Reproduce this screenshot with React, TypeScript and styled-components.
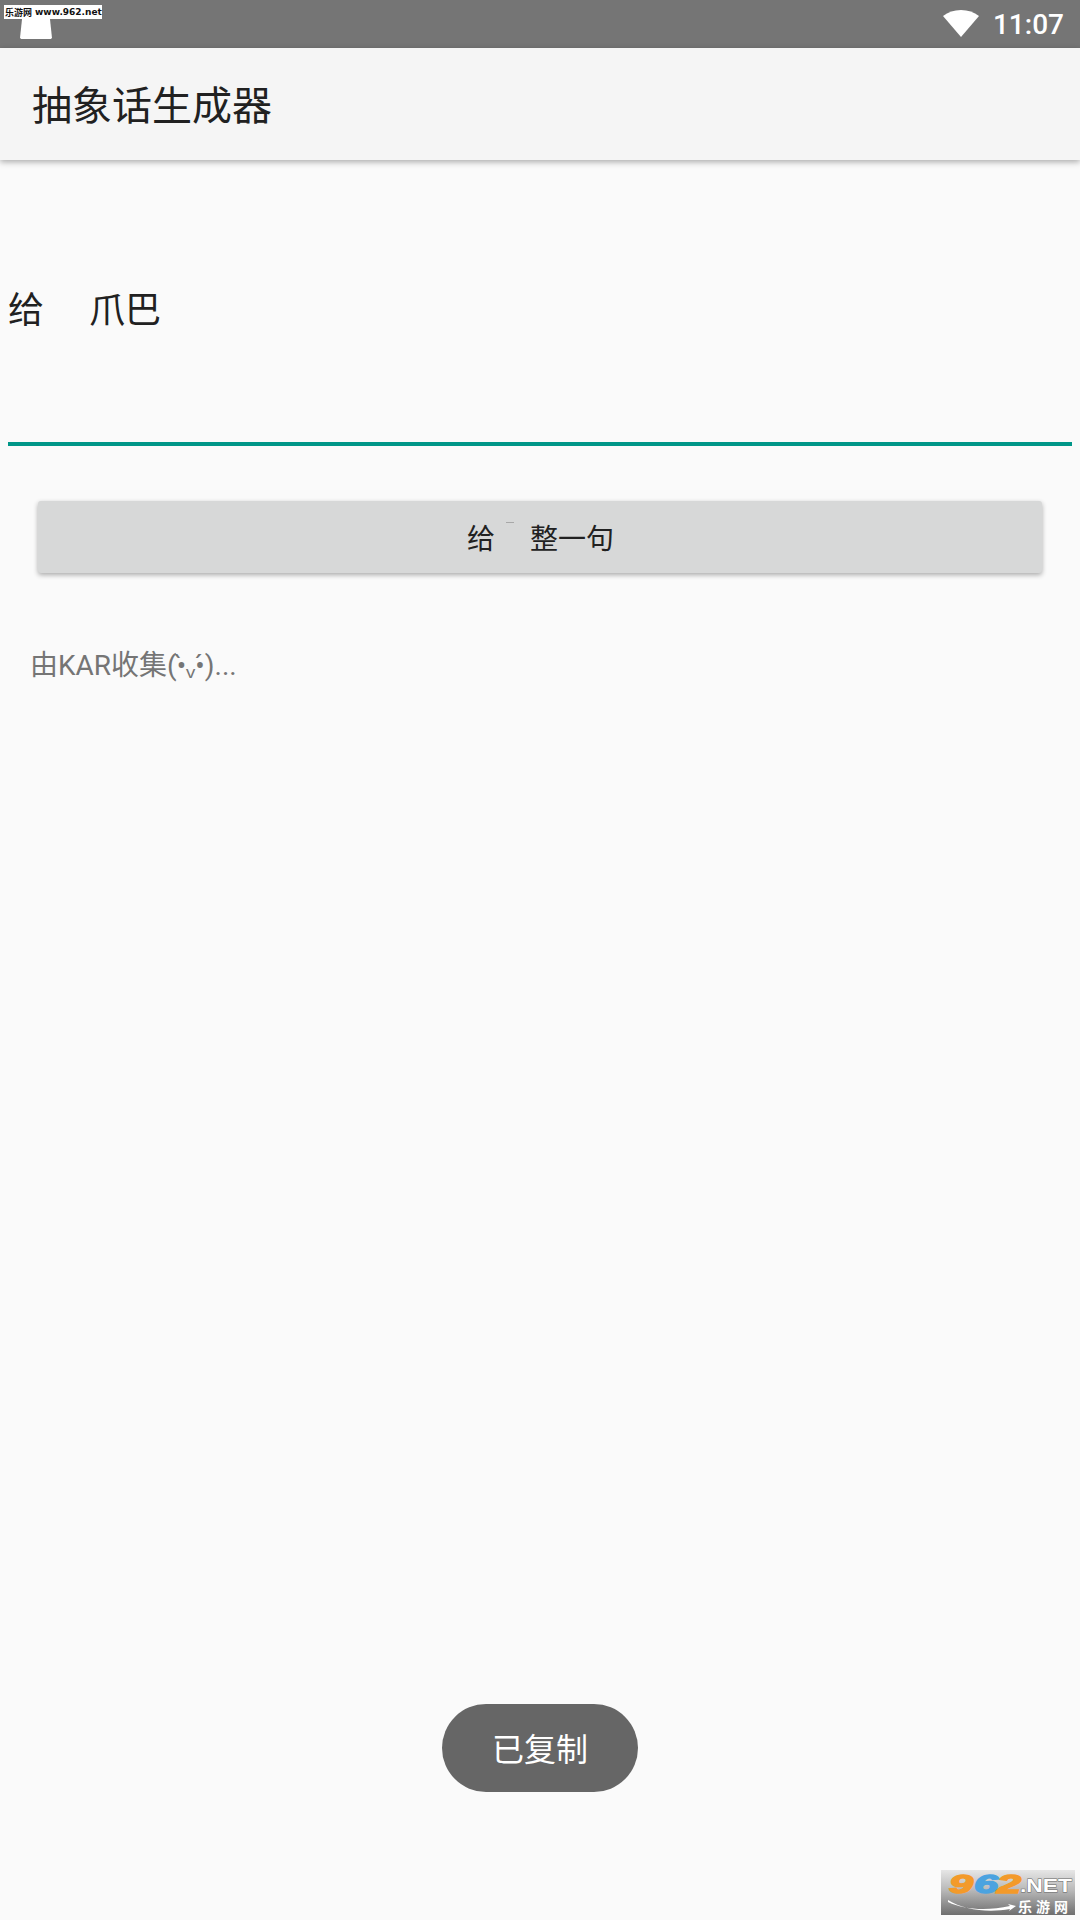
import React from "react";
import styled, { createGlobalStyle } from "styled-components";

const CJK = `"Noto Sans CJK SC", "Noto Sans", sans-serif`;

const GlobalStyle = createGlobalStyle`
  html, body {
    margin: 0;
    padding: 0;
    background: #fafafa;
  }
  * {
    box-sizing: border-box;
  }
`;

const Screen = styled.div`
  position: relative;
  width: 1080px;
  height: 1920px;
  overflow: hidden;
  background: #fafafa;
  font-family: ${CJK};
`;

const StatusBar = styled.div`
  display: flex;
  align-items: center;
  justify-content: space-between;
  height: 48px;
  padding: 0 16px 0 20px;
  background: #757575;
`;

const NotifyIcon = styled.div`
  align-self: flex-start;
  width: 32px;
  height: 22px;
  margin-top: 17px;
  background: #fff;
  clip-path: polygon(7% 0, 93% 0, 100% 95%, 96% 100%, 4% 100%, 0 95%);
`;

const StatusRight = styled.div`
  display: flex;
  align-items: center;
  gap: 14px;
`;

const Clock = styled.span`
  padding-top: 2px;
  font-family: Roboto, sans-serif;
  font-size: 28px;
  font-weight: 500;
  line-height: 48px;
  color: #fff;
`;

const Toolbar = styled.header`
  position: relative;
  display: flex;
  align-items: center;
  height: 112px;
  padding: 0 0 2px 32px;
  background: #f5f5f5;
  box-shadow: 0 2px 6px rgba(0, 0, 0, 0.32);
`;

const Title = styled.h1`
  margin: 0;
  font-size: 40px;
  font-weight: 400;
  color: #212121;
`;

const InputArea = styled.div`
  display: flex;
  height: 286px;
  margin: 0 8px;
  padding-top: 122px;
  border-bottom: 4px solid #009688;
  font-size: 36px;
  line-height: 50px;
  color: #212121;
`;

const InputWord = styled.span<{ $gap?: number }>`
  margin-left: ${({ $gap }) => $gap ?? 0}px;
`;

const ActionButton = styled.button`
  position: relative;
  display: flex;
  align-items: center;
  justify-content: center;
  width: 1004px;
  height: 72px;
  margin: 55px 0 0 38px;
  padding: 0 0 0 1px;
  border: 0;
  border-radius: 3px;
  background: #d7d8d8;
  box-shadow: 0 2px 5px rgba(0, 0, 0, 0.32);
  font-family: ${CJK};
  font-size: 28px;
  color: #212121;
`;

const ButtonGap = styled.span`
  position: relative;
  display: inline-block;
  width: 35px;
  height: 36px;
  &::before {
    content: "";
    position: absolute;
    left: 11px;
    top: 3px;
    width: 8px;
    height: 1px;
    background: #a8a8a8;
  }
`;

const Footnote = styled.p`
  margin: 73px 0 0 30px;
  font-family: Roboto, ${CJK};
  font-size: 28px;
  line-height: 40px;
  color: #757575;
`;

const Toast = styled.div`
  position: absolute;
  left: 442px;
  top: 1704px;
  display: flex;
  align-items: center;
  justify-content: center;
  width: 196px;
  height: 88px;
  padding-bottom: 3px;
  border-radius: 44px;
  background: #666;
  font-size: 32px;
  color: #fff;
`;

const SiteStamp = styled.div`
  position: absolute;
  left: 4px;
  top: 5px;
  display: flex;
  align-items: center;
  gap: 3px;
  width: 98px;
  height: 14px;
  padding-left: 1px;
  background: #fff;
  font-family: "DejaVu Sans", ${CJK};
  font-size: 9px;
  font-weight: 700;
  color: #111;
  white-space: nowrap;
`;

const Watermark = styled.svg`
  position: absolute;
  left: 941px;
  top: 1870px;
`;

const WifiIcon = () => (
  <svg width="36" height="30" viewBox="0 0 36 30">
    <path d="M0 7C5 3 11 1 18 1s13 2 18 6L18 28z" fill="#fff" />
  </svg>
);

const LogoDigit = ({ x, fill, value }: { x: number; fill: string; value: string }) => (
  <text
    x={x}
    y="23"
    fontFamily="Liberation Sans"
    fontSize="25"
    fontWeight="700"
    fontStyle="italic"
    fill={fill}
    stroke={fill}
    strokeWidth="1.4"
    textLength="24"
    lengthAdjust="spacingAndGlyphs"
  >
    {value}
  </text>
);

const LogoMark = () => (
  <Watermark width="134" height="45" viewBox="0 0 134 45">
    <defs>
      <linearGradient id="logo-bg" x1="0" y1="0" x2="0" y2="1">
        <stop offset="0" stopColor="#e6e6e6" />
        <stop offset="0.45" stopColor="#b8b8b8" />
        <stop offset="1" stopColor="#6e6e6e" />
      </linearGradient>
    </defs>
    <rect width="134" height="45" fill="url(#logo-bg)" />
    <LogoDigit x={8} fill="#f39a2a" value="9" />
    <LogoDigit x={33} fill="#4ba3e0" value="6" />
    <LogoDigit x={56} fill="#f39a2a" value="2" />
    <text x="79" y="22" fontFamily="Liberation Sans" fontSize="18" fontWeight="700" fill="#fff" stroke="#666" strokeWidth="0.8" paintOrder="stroke" textLength="52" lengthAdjust="spacingAndGlyphs">.NET</text>
    <text x="77" y="42" fontFamily="Noto Sans CJK SC" fontSize="14" fontWeight="700" fill="#fff" textLength="50" lengthAdjust="spacing">乐游网</text>
    <path d="M7 32c16 8 40 9 62 4l-2-2 8 2-7 5 1-2c-22 4-46 1-62-9z" fill="#fff" />
  </Watermark>
);

const App = () => {
  return (
    <Screen>
      <GlobalStyle />
      <StatusBar>
        <NotifyIcon />
        <StatusRight>
          <WifiIcon />
          <Clock>11:07</Clock>
        </StatusRight>
      </StatusBar>
      <Toolbar>
        <Title>抽象话生成器</Title>
      </Toolbar>
      <InputArea>
        <InputWord>给</InputWord>
        <InputWord $gap={45}>爪巴</InputWord>
      </InputArea>
      <ActionButton>
        给<ButtonGap />整一句
      </ActionButton>
      <Footnote>由KAR收集(•̀ᵥ•́)...</Footnote>
      <Toast>已复制</Toast>
      <SiteStamp>
        <span>乐游网</span>
        <span>www.962.net</span>
      </SiteStamp>
      <LogoMark />
    </Screen>
  );
};

export default App;
